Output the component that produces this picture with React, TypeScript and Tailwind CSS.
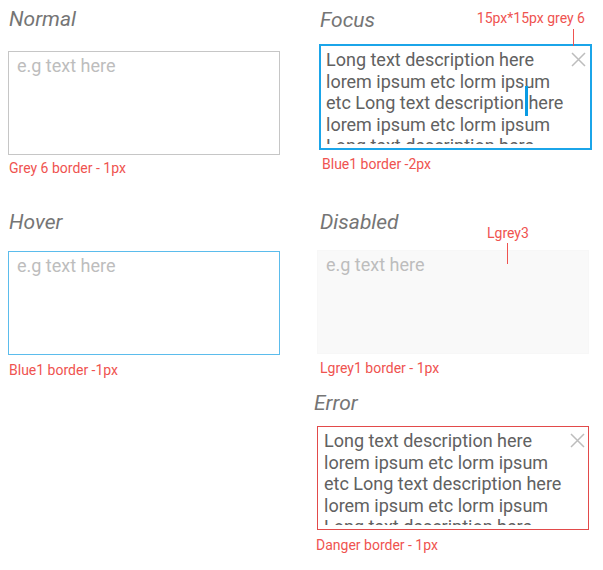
import React from 'react';

const longLines = [
  'Long text description here',
  'lorem ipsum etc lorm ipsum',
  'etc Long text description here',
  'lorem ipsum etc lorm ipsum',
  'Long text description here',
];

function CloseIcon() {
  return (
    <svg width="15" height="15" viewBox="0 0 15 15" fill="none" stroke="#bdbdbd" strokeWidth="1.5">
      <path d="M1 1L14 14M14 1L1 14" />
    </svg>
  );
}

function Title({ children, className = '' }: { children: React.ReactNode; className?: string }) {
  return <h2 className={`text-[21px] leading-[24px] italic text-[#757575] ${className}`}>{children}</h2>;
}

function Note({ children, className = '' }: { children: React.ReactNode; className?: string }) {
  return <p className={`text-[14px] leading-[16px] text-[#ef5350] ${className}`}>{children}</p>;
}

function Placeholder({ className = '' }: { className?: string }) {
  return <span className={`block text-[18px] leading-[22px] text-[#bdbdbd] ${className}`}>e.g text here</span>;
}

export default function App() {
  return (
    <main className="relative min-h-screen bg-white font-['Roboto',sans-serif]">
      <div className="flex pl-2">

        {/* left column */}
        <div className="w-[272px] flex flex-col">
          <Title className="mt-[7px] ml-px">Normal</Title>
          <div className="mt-[20px] h-[104px] border border-[#c6c6c6] pl-[8px] pt-[3px]">
            <Placeholder />
          </div>
          <Note className="mt-[5px] ml-px">Grey 6 border - 1px</Note>

          <Title className="mt-[34px] ml-px">Hover</Title>
          <div className="mt-[17px] h-[104px] border border-[#5bbcec] pl-[8px] pt-[3px]">
            <Placeholder />
          </div>
          <Note className="mt-[7px] ml-px">Blue1 border -1px</Note>
        </div>

        {/* right column */}
        <div className="ml-[37px] w-[275px] flex flex-col">
          <Title className="mt-[8px] ml-[3px]">Focus</Title>
          <div className="relative mt-[12px] ml-[2px] w-[273px] h-[106px] border-2 border-[#1ba5e9] pl-[5px] pt-[3px]">
            <div className="absolute bottom-full right-[5px] mb-[20px] whitespace-nowrap">
              <Note>15px*15px grey 6</Note>
            </div>
            <div className="absolute bottom-full right-[16px] w-px h-[17px] bg-[#ef5350]" />
            <div className="h-[95px] overflow-hidden text-[18px] leading-[21.5px] text-[#616161] whitespace-nowrap">
              <div>{longLines[0]}</div>
              <div>{longLines[1]}</div>
              <div>
                etc Long text description
                <span className="relative inline-block w-0">
                  <span className="absolute left-[1px] top-[-23px] w-[3px] h-[30px] bg-[#0a9be3]" />
                </span>{' '}here
              </div>
              <div>{longLines[3]}</div>
              <div>{longLines[4]}</div>
            </div>
            <div className="absolute top-[6px] right-[4px]">
              <CloseIcon />
            </div>
          </div>
          <Note className="mt-[6px] ml-[5px]">Blue1 border -2px</Note>

          <Title className="mt-[38px] ml-[3px]">Disabled</Title>
          <div className="relative mt-[16px] w-[272px] h-[104px] bg-[#f9f9f9] border border-[#f7f7f7] pl-[8px] pt-[3px]">
            <div className="absolute bottom-full left-[169px] mb-[10px]">
              <Note>Lgrey3</Note>
            </div>
            <div className="absolute top-[-8px] left-[189px] w-px h-[21px] bg-[#ef5350]" />
            <Placeholder />
          </div>
          <Note className="mt-[6px] ml-[3px]">Lgrey1 border - 1px</Note>

          <Title className="mt-[15px] ml-[-3px]">Error</Title>
          <div className="relative mt-[11px] w-[272px] h-[104px] border border-[#e24a4a] pl-[6px] pt-[3px]">
            <div className="h-[95px] overflow-hidden text-[18px] leading-[21.5px] text-[#616161] whitespace-nowrap">
              {longLines.map((l, i) => (
                <div key={i}>{l}</div>
              ))}
            </div>
            <div className="absolute top-[6px] right-[3px]">
              <CloseIcon />
            </div>
          </div>
          <Note className="mt-[7px] ml-[-1px]">Danger border - 1px</Note>
        </div>

      </div>
    </main>
  );
}
